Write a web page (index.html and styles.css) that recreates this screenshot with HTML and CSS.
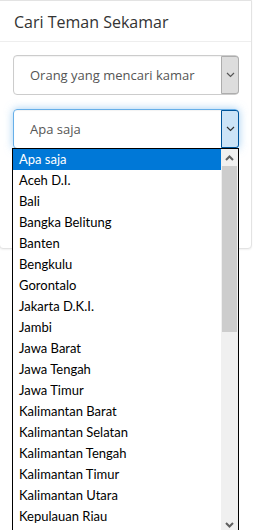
FILE: index.html
```html
<!DOCTYPE html>
<html lang="id">
<head>
  <meta charset="UTF-8" />
  <meta name="viewport" content="width=device-width, initial-scale=1.0" />
  <title>Cari Teman Sekamar</title>
  <link rel="stylesheet" href="styles.css">
</head>
<body>
  <div class="card">
    <div class="card-head">Cari Teman Sekamar</div>
    <div class="card-body">
      <div class="select">
        <span class="select-text">Orang yang mencari kamar</span>
        <span class="select-btn">
          <svg width="9" height="6" viewBox="0 0 9 6"><path d="M1 1 L4.5 4.5 L8 1" fill="none" stroke="#555" stroke-width="1.2"/></svg>
        </span>
      </div>
      <div class="select focus">
        <span class="select-text">Apa saja</span>
        <span class="select-btn">
          <svg width="9" height="6" viewBox="0 0 9 6"><path d="M1 1 L4.5 4.5 L8 1" fill="none" stroke="#333" stroke-width="1.2"/></svg>
        </span>
      </div>
    </div>
  </div>

  <div class="dropdown">
    <ul class="options">
      <li class="active">Apa saja</li>
      <li>Aceh D.I.</li>
      <li>Bali</li>
      <li>Bangka Belitung</li>
      <li>Banten</li>
      <li>Bengkulu</li>
      <li>Gorontalo</li>
      <li>Jakarta D.K.I.</li>
      <li>Jambi</li>
      <li>Jawa Barat</li>
      <li>Jawa Tengah</li>
      <li>Jawa Timur</li>
      <li>Kalimantan Barat</li>
      <li>Kalimantan Selatan</li>
      <li>Kalimantan Tengah</li>
      <li>Kalimantan Timur</li>
      <li>Kalimantan Utara</li>
      <li>Kepulauan Riau</li>
    </ul>
    <div class="scrollbar">
      <div class="sb-arrow">
        <svg width="9" height="6" viewBox="0 0 9 6"><path d="M1 5 L4.5 1.5 L8 5" fill="none" stroke="#606060" stroke-width="2"/></svg>
      </div>
      <div class="sb-track">
        <div class="sb-thumb"></div>
      </div>
      <div class="sb-arrow">
        <svg width="9" height="6" viewBox="0 0 9 6"><path d="M1 1 L4.5 4.5 L8 1" fill="none" stroke="#606060" stroke-width="2"/></svg>
      </div>
    </div>
  </div>
</body>
</html>
```

FILE: styles.css
```css
html, body {
  height: 530px;
  overflow: hidden;
}
body {
  margin: 0;
  background: #fff;
  font-family: 'Open Sans', sans-serif;
  color: #333;
  position: relative;
}
.card {
  margin-left: -1px;
  width: 251px;
  height: 247px;
  border: 1px solid #e3e3e3;
  border-radius: 0 0 4px 4px;
  box-shadow: 0 1px 2px rgba(0,0,0,0.06);
  background: #fff;
}
.card-head {
  height: 40px;
  padding: 0 14px;
  border-bottom: 1px solid #eee;
  font-size: 16px;
  line-height: 42px;
}
.card-body {
  padding: 13px 12px 0 13px;
}
.select {
  display: flex;
  align-items: stretch;
  height: 38px;
  border: 1px solid #ccc;
  border-radius: 4px;
  margin-bottom: 14px;
  box-shadow: inset 0 1px 1px rgba(0,0,0,0.05);
}
.select-text {
  flex: 1;
  padding-left: 16px;
  font-size: 13px;
  line-height: 38px;
  color: #555;
}
.select-btn {
  width: 16px;
  margin: 0 -1px 0 0;
  display: flex;
  align-items: center;
  justify-content: center;
  background: #ddd;
  border: 1px solid #adadad;
  border-radius: 0 3px 3px 0;
}
.select.focus {
  border-color: #66afe9;
  box-shadow: inset 0 1px 1px rgba(0,0,0,0.05), 0 0 8px rgba(102,175,233,0.6);
}
.select.focus .select-btn {
  background: #cce4f7;
  border-color: #005499;
}
.dropdown {
  position: absolute;
  left: 12px;
  top: 148px;
  width: 225px;
  height: 384px;
  border: 1px solid #000;
  background: #fff;
  display: flex;
}
.options {
  flex: 1;
  margin: 0;
  padding: 0;
  list-style: none;
  overflow: hidden;
  font-family: Lato, 'Open Sans', sans-serif;
  font-size: 13px;
  color: #000;
}
.options li {
  height: 21px;
  line-height: 21px;
  padding-left: 6px;
}
.options li.active {
  background: #0078d7;
  color: #fff;
}
.scrollbar {
  width: 17px;
  display: flex;
  flex-direction: column;
  background: #f0f0f0;
}
.sb-arrow {
  height: 17px;
  display: flex;
  align-items: center;
  justify-content: center;
}
.sb-track {
  flex: 1;
  padding: 0 1px;
}
.sb-thumb {
  height: 166px;
  background: #cdcdcd;
}
```
